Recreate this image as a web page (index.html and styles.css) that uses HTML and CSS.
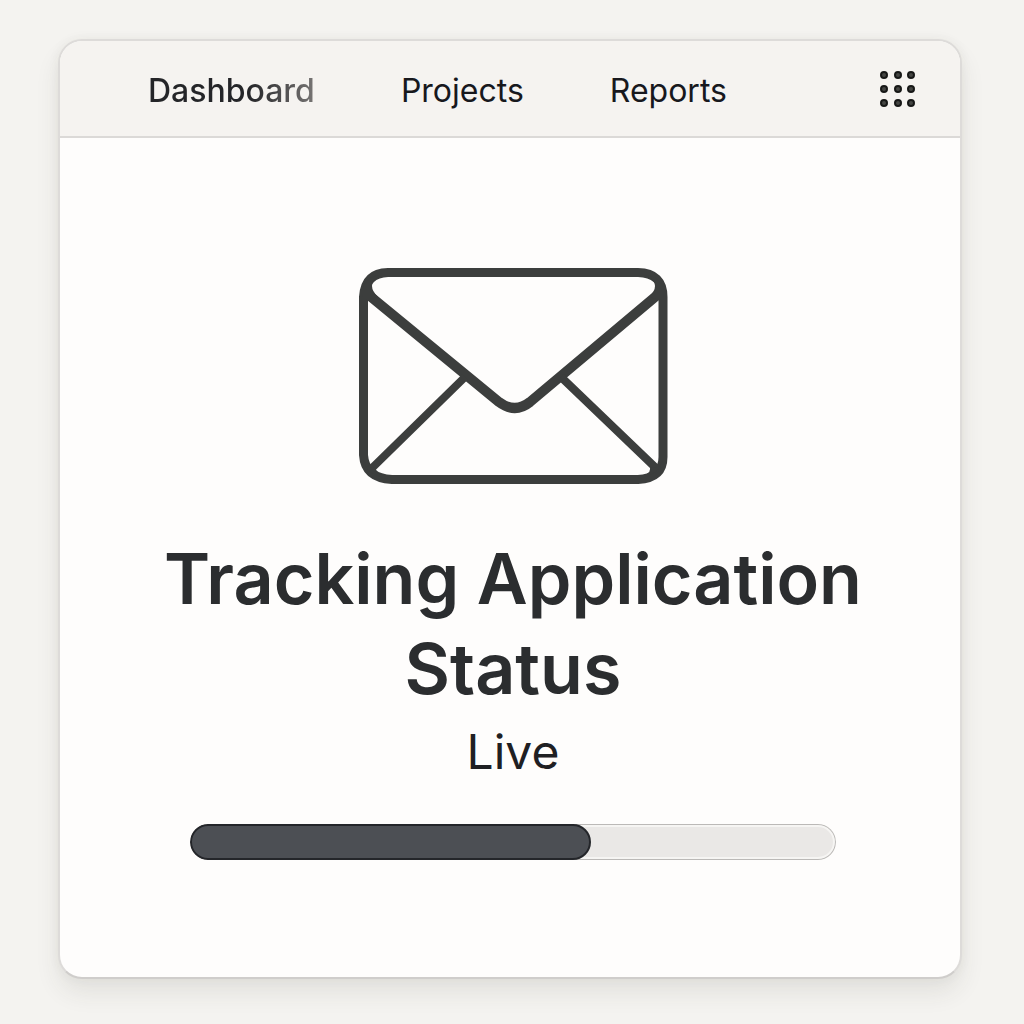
FILE: index.html
```html
<!DOCTYPE html>
<html lang="en">
<head>
  <meta charset="UTF-8" />
  <meta name="viewport" content="width=device-width, initial-scale=1.0"/>
  <title>Tracking Application Status</title>
  <link rel="stylesheet" href="styles.css">
</head>
<body>
  <div class="card">
    <header>
      <nav>
        <a class="active" href="#dashboard">Dashboard</a>
        <a href="#projects">Projects</a>
        <a href="#reports">Reports</a>
      </nav>
      <button class="apps" type="button" aria-label="Apps">
        <svg width="36" height="42" viewBox="0 0 36 42">
          <circle cx="4" cy="5" r="3"/><circle cx="18" cy="5" r="3"/><circle cx="31" cy="5" r="3"/>
          <circle cx="4" cy="19" r="3"/><circle cx="18" cy="19" r="3"/><circle cx="31" cy="19" r="3"/>
          <circle cx="4" cy="33" r="3"/><circle cx="18" cy="33" r="3"/><circle cx="31" cy="33" r="3"/>
        </svg>
      </button>
    </header>

    <main>
      <svg class="envelope" width="310" height="218" viewBox="0 0 310 218">
        <path d="M30 5.500H280Q305 6 305 30V190Q305 211 280 212.500H34Q7 211 5.500 188V30Q7 6 30 5.500Z"/>
        <path class="flap" d="M7 25L141 135Q157 147 172 135L303 25"/>
        <path class="fold" d="M107 110L11 204M203 110L301 204"/>
        <path class="fill" d="M5 20Q11 8 24 8Q14 12 14 19Q14 24 20 30L12 32L5 32ZM305 20Q299 8 286 8Q297 12 297 19Q297 24 291 30L298 32L305 32ZM5 193Q9 208 30 212V209Q17 208 18 201L10 200ZM305 193Q301 208 280 212V209Q293 208 292 201L300 200Z"/>
      </svg>
      <h1>Tracking Application Status</h1>
      <label for="progress">Live</label>
      <progress id="progress" value="62" max="100"></progress>
    </main>
  </div>
</body>
</html>
```
FILE: styles.css
```css
* {
  box-sizing: border-box;
}
body {
  margin: 0;
  min-height: 100vh;
  padding: 39px 62px 45px 58px;
  display: flex;
  background-color: #f4f3f0;
  font-family: Inter, "Liberation Sans", sans-serif;
  color: #2b2d2f;
}
.card {
  flex: 1;
  display: flex;
  flex-direction: column;
  background-color: #fefdfc;
  border: 2px solid #dddbd9;
  border-bottom-color: #cfcdcb;
  border-radius: 24px;
  box-shadow: 0 14px 24px rgba(60,50,45,0.09), 0 0 12px rgba(60,50,45,0.05);
  overflow: hidden;
}
header {
  display: flex;
  justify-content: space-between;
  align-items: center;
  padding: 27px 44px 22px 88px;
  background-color: #f5f3f0;
  border-bottom: 2px solid #dbd9d7;
}
nav {
  display: flex;
  gap: 86px;
}
nav a {
  font-size: 32px;
  line-height: 46px;
  color: #17181d;
  text-decoration: none;
}
nav .active {
  font-weight: 500;
  color: transparent;
  background: linear-gradient(90deg, #242528 60%, #777574);
  background-clip: text;
  -webkit-background-clip: text;
}
.apps {
  display: flex;
  padding: 0;
  border: none;
  background: none;
}
.apps circle {
  fill: #454643;
  stroke: #171817;
  stroke-width: 2;
}
main {
  display: flex;
  flex-direction: column;
  align-items: center;
  padding: 129px 88px 114px 94px;
  text-align: center;
}
.envelope path {
  fill: none;
  stroke: #3c3e3d;
  stroke-width: 9;
}
.envelope .flap {
  stroke-width: 10;
}
.envelope .fold {
  stroke-width: 8;
}
.envelope .fill {
  fill: #3c3e3d;
  stroke: none;
}
h1 {
  margin: 49px 0 0;
  font-size: 70px;
  line-height: 90px;
  font-weight: 600;
}
label {
  margin-top: 8px;
  font-size: 48px;
  line-height: 60px;
  color: #1f2023;
}
progress {
  width: 90%;
  height: 36px;
  margin-top: 42px;
  appearance: none;
  -webkit-appearance: none;
  border: none;
  border-radius: 18px;
  background-color: #eae8e6;
  overflow: hidden;
}
progress::-webkit-progress-bar {
  background-color: #eae8e6;
  border-radius: 18px;
  box-shadow: inset 0 0 0 1px #bbb9b7, inset 0 0 0 3px #f6f5f3;
}
progress::-webkit-progress-value {
  background-color: #4c4f54;
  border: 2px solid #24262a;
  border-radius: 18px;
}
```
